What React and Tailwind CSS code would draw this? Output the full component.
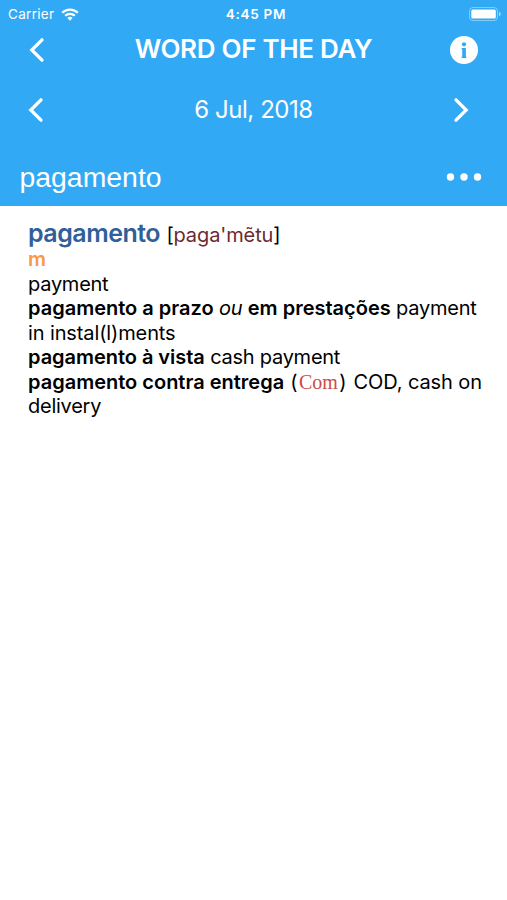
const entries = [
  { term: 'pagamento à vista', text: 'cash payment' },
];

function StatusBar() {
  return (
    <div className="grid h-7 grid-cols-3 items-center pr-[6px] pl-2 text-[13.5px]">
      <div className="flex items-center gap-[7px]">
        <span className="tracking-[0.3px]">Carrier</span>
        <svg width="18" height="13" viewBox="0 0 18 13" fill="none" stroke="currentColor" strokeWidth="2.3">
          <path d="M1.2 4.8a11 11 0 0 1 15.6 0" />
          <path d="M4.2 7.8a6.8 6.8 0 0 1 9.6 0" />
          <path d="M9 12.8 6.4 10.1a3.7 3.7 0 0 1 5.2 0z" fill="currentColor" stroke="none" />
        </svg>
      </div>
      <span className="pl-[3px] text-center font-semibold tracking-[0.7px] whitespace-nowrap">4:45 PM</span>
      <svg className="justify-self-end" width="32" height="14" viewBox="0 0 32 14" fill="none">
        <rect x="0.5" y="0.5" width="28" height="13" rx="3.5" stroke="currentColor" opacity="0.4" />
        <rect x="2.3" y="2.5" width="24.5" height="9" rx="1.5" fill="currentColor" />
        <path d="M30 4.5v5a2.6 2.6 0 0 0 0-5z" fill="currentColor" opacity="0.5" />
      </svg>
    </div>
  );
}

function Chevron({ right }) {
  return (
    <svg width="16" height="26" viewBox="0 0 16 26" fill="none" stroke="currentColor" strokeWidth="3.3" strokeLinecap="round">
      <path d={right ? 'M3 2.8L13.2 13 3 23.2' : 'M13 2.8L2.8 13 13 23.2'} />
    </svg>
  );
}

export default function App() {
  return (
    <div className="min-h-screen bg-white font-['Inter',sans-serif]">
      <header className="h-[206px] bg-[#32a9f4] text-white">
        <StatusBar />
        <div className="grid h-11 grid-cols-[1fr_auto_1fr] items-center pr-[29px] pl-[29px]">
          <Chevron />
          <h1 className="pb-[3px] text-[26px] font-semibold tracking-[-0.3px] whitespace-nowrap">WORD OF THE DAY</h1>
          <svg className="justify-self-end" width="28" height="28" viewBox="0 0 28 28">
            <circle cx="14" cy="14" r="14" fill="#fff" />
            <circle cx="14" cy="8.3" r="2.1" fill="#32a9f4" />
            <path d="M11.6 12h4.3v8.7h.5V22h-4.8v-1.3h.6v-7.4h-.6z" fill="#32a9f4" />
          </svg>
        </div>
        <div className="flex h-[76px] items-center justify-between pr-[38px] pl-[28px]">
          <Chevron />
          <span className="ml-2.5 text-[24px] tracking-[-0.45px]">6 Jul, 2018</span>
          <Chevron right />
        </div>
        <div className="flex h-[58px] items-center justify-between pr-[25px] pl-[19.5px]">
          <span className="font-['Liberation_Sans',sans-serif] text-[28.4px]">pagamento</span>
          <svg width="36" height="8" viewBox="0 0 36 8" fill="currentColor">
            <circle cx="4.5" cy="4" r="3.7" />
            <circle cx="18" cy="4" r="3.7" />
            <circle cx="31.5" cy="4" r="3.7" />
          </svg>
        </div>
      </header>
      <main className="px-7 pt-[14.5px] text-[20px] leading-[24.5px] tracking-[-0.25px] text-black">
        <p className="whitespace-nowrap">
          <b className="text-[25px] font-semibold tracking-[-0.5px] text-[#2f6099]">pagamento</b> <span className="ml-px">[</span><span className="tracking-[-0.1px] text-[#6e2a2e]">paga'mẽtu</span>]
        </p>
        <p className="font-semibold text-[#f7994a]">m</p>
        <p>payment</p>
        <p className="whitespace-nowrap"><b className="font-semibold tracking-normal">pagamento a prazo</b> <i>ou</i> <b className="font-semibold tracking-normal">em prestações</b> payment</p>
        <p className="tracking-[-0.12px]">in instal(l)ments</p>
        {entries.map((e) => (
          <p key={e.term}><b className="font-semibold tracking-[-0.04px]">{e.term}</b> {e.text}</p>
        ))}
        <p className="tracking-[-0.1px] whitespace-nowrap">
          <b className="font-semibold tracking-normal">pagamento contra entrega</b> <span className="ml-[0.5px]">(</span><span className="mx-[1.5px] font-['Liberation_Serif',serif] tracking-normal text-[#cc4a47]">Com</span>) <span className="ml-[1.5px]">COD, cash on</span>
        </p>
        <p>delivery</p>
      </main>
    </div>
  );
}
